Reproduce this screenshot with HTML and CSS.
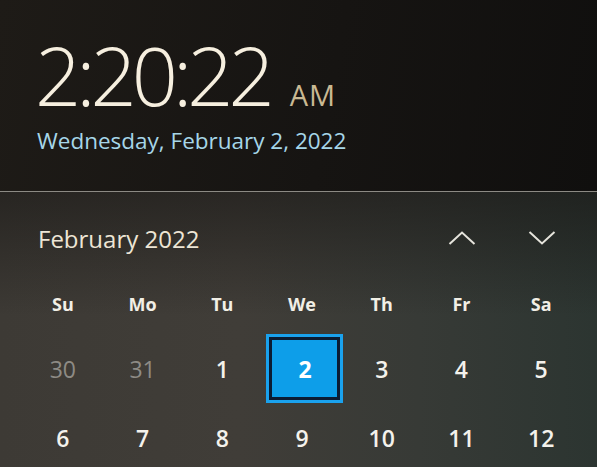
FILE: index.html
```html
<!DOCTYPE html>
<html>
<head>
<meta charset="utf-8">
<link rel="stylesheet" href="styles.css">
</head>
<body>
<div class="flyout">
  <section class="clock">
    <div class="time"><span class="hms">2:20:22</span><span class="ampm">AM</span></div>
    <div class="date">Wednesday, February 2, 2022</div>
  </section>
  <section class="calendar">
    <header class="cal-head">
      <span class="month">February 2022</span>
      <div class="nav">
        <svg class="chev" width="28" height="14" viewBox="0 0 28 14"><polyline points="1.5,13 14,1.5 26.5,13" /></svg>
        <svg class="chev" width="28" height="14" viewBox="0 0 28 14"><polyline points="1.5,1 14,12.5 26.5,1" /></svg>
      </div>
    </header>
    <div class="grid">
      <div class="wd">Su</div><div class="wd">Mo</div><div class="wd">Tu</div><div class="wd">We</div><div class="wd">Th</div><div class="wd">Fr</div><div class="wd">Sa</div>
      <div class="day other">30</div><div class="day other">31</div><div class="day">1</div><div class="day today"><span class="sel">2</span></div><div class="day">3</div><div class="day">4</div><div class="day">5</div>
      <div class="day">6</div><div class="day">7</div><div class="day">8</div><div class="day">9</div><div class="day">10</div><div class="day">11</div><div class="day">12</div>
    </div>
  </section>
</div>
</body>
</html>
```

FILE: styles.css
```css
html, body {
  margin: 0;
  padding: 0;
  background: #151311;
}
.flyout {
  width: 597px;
  height: 467px;
  overflow: hidden;
  display: flex;
  flex-direction: column;
  font-family: "Open Sans", "Noto Sans", sans-serif;
}
.clock {
  flex-shrink: 0;
  height: 192px;
  box-sizing: border-box;
  padding: 30px 0 0 35px;
  background: linear-gradient(100deg, #1e1b17 0%, #161412 55%, #100f0e 100%);
  border-bottom: 1px solid #8c8a84;
}
.time {
  display: flex;
  align-items: baseline;
  gap: 20px;
  height: 90px;
}
.hms {
  font-weight: 300;
  font-size: 81px;
  line-height: 90px;
  letter-spacing: -5px;
  color: #f6efdf;
}
.ampm {
  font-size: 29px;
  font-weight: 400;
  letter-spacing: 1px;
  color: #c9b993;
}
.date {
  margin-top: 6px;
  padding-left: 2px;
  font-size: 22.5px;
  line-height: 30px;
  color: #a6d6e8;
}
.calendar {
  flex: 1;
  min-height: 0;
  overflow: hidden;
  background:
    linear-gradient(180deg, rgba(22,20,18,0.55) 0%, rgba(22,20,18,0) 45%),
    linear-gradient(90deg, #3d3a35 0%, #403d38 40%, #373a36 70%, #2c3531 100%);
}
.cal-head {
  display: flex;
  justify-content: space-between;
  align-items: center;
  padding: 30px 41px 0 38px;
  height: 32px;
}
.month {
  font-size: 24px;
  color: #ede5d5;
}
.nav {
  display: flex;
  gap: 52px;
}
.chev polyline {
  fill: none;
  stroke: #e6e4dc;
  stroke-width: 2;
}
.grid {
  margin: 20px 0 0 23px;
  width: 558px;
  display: grid;
  grid-template-columns: repeat(7, 1fr);
  grid-template-rows: 60px 69px 69px;
}
.wd {
  display: flex;
  align-items: center;
  justify-content: center;
  font-size: 18px;
  font-weight: 700;
  color: #f2efe6;
}
.day {
  display: flex;
  align-items: center;
  justify-content: center;
  font-size: 23px;
  font-weight: 600;
  color: #f4f2ec;
}
.day.other {
  font-weight: 400;
  color: #8e8b85;
}
.sel {
  width: 77px;
  height: 69px;
  box-sizing: border-box;
  display: flex;
  align-items: center;
  justify-content: center;
  transform: translateX(3px);
  background: #0d9ee9;
  border: 3px solid #1aa2ee;
  box-shadow: inset 0 0 0 3px #0b1c33;
  font-weight: 700;
  color: #ffffff;
}
```
